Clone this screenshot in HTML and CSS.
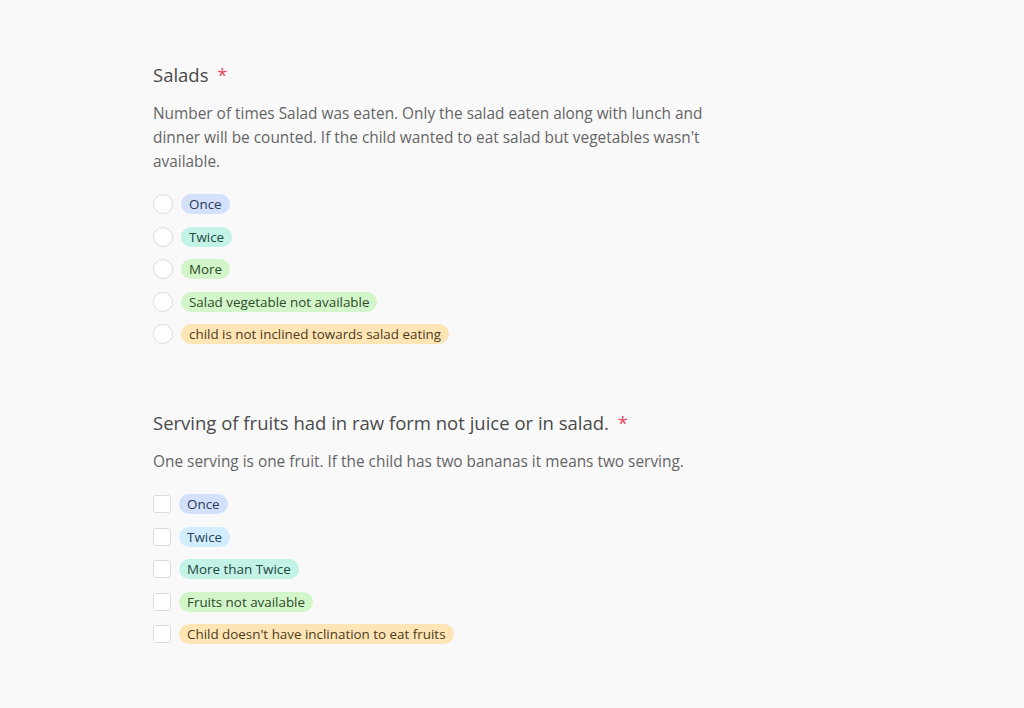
FILE: index.html
```html
<!DOCTYPE html>
<html lang="en">
<head>
<meta charset="utf-8">
<title>Form</title>
<link rel="stylesheet" href="styles.css">
</head>
<body>
<main class="form">
  <section class="question">
    <h2 class="q-title">Salads <span class="req">*</span></h2>
    <p class="q-desc">Number of times Salad was eaten. Only the salad eaten along with lunch and dinner will be counted. If the child wanted to eat salad but vegetables wasn't available.</p>
    <ul class="options">
      <li class="option"><span class="radio"></span><span class="pill blue">Once</span></li>
      <li class="option"><span class="radio"></span><span class="pill teal">Twice</span></li>
      <li class="option"><span class="radio"></span><span class="pill green">More</span></li>
      <li class="option"><span class="radio"></span><span class="pill green">Salad vegetable not available</span></li>
      <li class="option"><span class="radio"></span><span class="pill orange">child is not inclined towards salad eating</span></li>
    </ul>
  </section>
  <section class="question">
    <h2 class="q-title">Serving of fruits had in raw form not juice or in salad. <span class="req">*</span></h2>
    <p class="q-desc">One serving is one fruit. If the child has two bananas it means two serving.</p>
    <ul class="options">
      <li class="option"><span class="check"></span><span class="pill blue">Once</span></li>
      <li class="option"><span class="check"></span><span class="pill sky">Twice</span></li>
      <li class="option"><span class="check"></span><span class="pill teal">More than Twice</span></li>
      <li class="option"><span class="check"></span><span class="pill green">Fruits not available</span></li>
      <li class="option"><span class="check"></span><span class="pill orange">Child doesn't have inclination to eat fruits</span></li>
    </ul>
  </section>
</main>
</body>
</html>
```

FILE: styles.css
```css
* { box-sizing: border-box; }
html, body { margin: 0; padding: 0; }
body {
  background: #f9f9f9;
  font-family: "Open Sans", "Noto Sans", sans-serif;
  color: #5f5f5f;
}
.form {
  padding: 61px 0 0 153px;
  width: 720px;
}
.question + .question { margin-top: 65px; }
.q-title {
  margin: 0;
  font-size: 18.5px;
  font-weight: 400;
  line-height: 28px;
  color: #4a4a4a;
}
.req {
  color: #e8485f;
  margin-left: 4px;
}
.q-desc {
  margin: 13px 0 0;
  font-size: 15.4px;
  line-height: 24px;
  color: #656565;
  max-width: 560px;
}
.options {
  list-style: none;
  margin: 20px 0 0;
  padding: 0;
  display: flex;
  flex-direction: column;
  gap: 12.5px;
}
.option {
  display: flex;
  align-items: center;
  height: 20px;
}
.radio {
  width: 20px;
  height: 20px;
  border-radius: 50%;
  border: 1.5px solid #dcdcdc;
  background: #fff;
  margin-right: 8px;
  flex: none;
}
.check {
  width: 18px;
  height: 18px;
  border-radius: 3px;
  border: 1.5px solid #dcdcdc;
  background: #fff;
  margin-right: 8px;
  flex: none;
}
.pill {
  display: inline-flex;
  align-items: center;
  height: 20px;
  padding: 0 8px;
  border-radius: 10px;
  font-size: 13.4px;
  color: #333;
  white-space: nowrap;
}
.blue { background: #d3e1fd; color: #2e3a55; }
.teal { background: #c2f3e6; color: #24453c; }
.green { background: #d2f6c9; color: #2f4a2a; }
.orange { background: #fde5b6; color: #4d3b1c; }
.sky { background: #d2edfd; color: #27405a; }
```
